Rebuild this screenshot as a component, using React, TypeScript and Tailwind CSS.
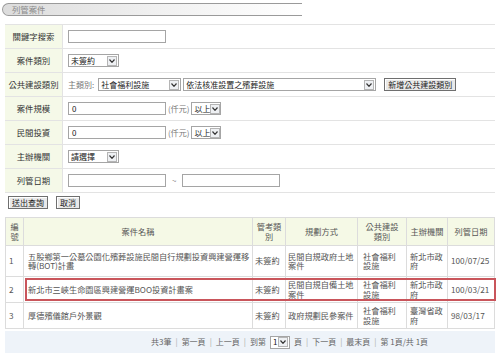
import React from 'react';

const font = { fontFamily: '"Noto Sans CJK TC", "Noto Sans", sans-serif' };

function Select({ w, label }: { w: number; label: string }) {
  return (
    <div
      className="flex h-[13px] items-center overflow-hidden whitespace-nowrap border border-[#a5a5a5] bg-white text-[8px] leading-none text-[#222]"
      style={{ width: w }}
    >
      <span className="flex-1 pl-[2px]">{label}</span>
      <span className="mr-[1px] flex h-[10px] w-[10px] shrink-0 items-center justify-center border border-[#b5b5b5] bg-[#eef0f3]">
        <svg width="6" height="4" viewBox="0 0 6 4">
          <path d="M0.5 0.5 L3 3.3 L5.5 0.5" fill="none" stroke="#333" strokeWidth="1.2" />
        </svg>
      </span>
    </div>
  );
}

function Input({ w, value = '' }: { w: number; value?: string }) {
  return (
    <div
      className="flex h-[13px] items-center border border-[#a5a5a5] bg-white pl-[3px] text-[8px] leading-none text-[#222]"
      style={{ width: w }}
    >
      {value}
    </div>
  );
}

function Btn({ children }: { children: React.ReactNode }) {
  return (
    <div className="flex h-[13px] items-center border border-[#6f6f6f] bg-[#e9e9e9] px-[3px] text-[8px] leading-none text-[#222] shadow-[inset_1px_1px_0_#fff]">
      {children}
    </div>
  );
}

function FormRow({ label, children }: { label: string; children: React.ReactNode }) {
  return (
    <div className="flex h-[24px] border-b border-[#e3e3e3]">
      <div className="flex w-[58px] items-center justify-center border-r border-[#e3e3e3] bg-[#f5f9e8] text-[8.4px] text-[#333]">
        {label}
      </div>
      <div className="flex flex-1 items-center gap-[2px] pl-[5px] text-[8px] text-[#555]">{children}</div>
    </div>
  );
}

const rows = [
  {
    no: '1',
    name: '五股鄉第一公墓公園化殯葬設施民間自行規劃投資興建營運移轉(BOT)計畫',
    type: '未簽約',
    plan: '民間自規政府土地案件',
    cat: '社會福利設施',
    org: '新北市政府',
    date: '100/07/25',
    h: 'h-[31px]',
    hl: false,
  },
  {
    no: '2',
    name: '新北市三峽生命園區興建營運BOO投資計畫案',
    type: '未簽約',
    plan: '民間自規自備土地案件',
    cat: '社會福利設施',
    org: '新北市政府',
    date: '100/03/21',
    h: 'h-[26px]',
    hl: true,
  },
  {
    no: '3',
    name: '厚德殯儀館戶外景觀',
    type: '未簽約',
    plan: '政府規劃民參案件',
    cat: '社會福利設施',
    org: '臺灣省政府',
    date: '98/03/17',
    h: 'h-[25px]',
    hl: false,
  },
];

const cols = ['w-[18px]', 'w-[229px]', 'w-[33px]', 'w-[72px]', 'w-[49px]', 'w-[41px]', 'flex-1'];
const headPad = ['px-[3px]', 'px-[3px]', 'px-[3px]', 'px-[3px]', 'px-[5px]', 'px-[3px]', 'px-[3px]'];

function App() {
  return (
    <div className="h-[353px] w-[500px] overflow-hidden bg-white" style={font}>
      {/* title */}
      <div className="px-[2px] pt-[3px]">
        <div className="flex h-[13px] w-[300px] items-center rounded-l-full border-y border-l border-[#9a9a9a] bg-gradient-to-r from-[#dcdcdc] via-[#f0f0f0] to-white pl-[9px] text-[8.4px] text-[#8a8a8a]">
          列管案件
        </div>
      </div>

      {/* search form */}
      <div className="mx-[5px] mt-[8px] border-t border-[#e3e3e3]">
        <FormRow label="關鍵字搜索">
          <Input w={98} />
        </FormRow>
        <FormRow label="案件類別">
          <Select w={51} label="未簽約" />
        </FormRow>
        <FormRow label="公共建設類別">
          <span className="mr-[2px] text-[#777]">主類別:</span>
          <Select w={83} label="社會福利設施" />
          <Select w={193} label="依法核准設置之殯葬設施" />
          <div className="ml-[6px]">
            <Btn>新增公共建設類別</Btn>
          </div>
        </FormRow>
        <FormRow label="案件規模">
          <Input w={98} value="0" />
          <span className="text-[#777]">(仟元)</span>
          <Select w={30} label="以上" />
        </FormRow>
        <FormRow label="民間投資">
          <Input w={98} value="0" />
          <span className="text-[#777]">(仟元)</span>
          <Select w={30} label="以上" />
        </FormRow>
        <FormRow label="主辦機關">
          <Select w={51} label="請選擇" />
        </FormRow>
        <FormRow label="列管日期">
          <Input w={98} />
          <span className="mx-[4px] text-[#888]">~</span>
          <Input w={98} />
        </FormRow>
      </div>

      {/* buttons */}
      <div className="flex gap-[8px] pl-[8px] pt-[3px]">
        <Btn>送出查詢</Btn>
        <Btn>取消</Btn>
      </div>

      {/* result table */}
      <div className="mx-[5px] mt-[8px] border border-[#dcdcdc] text-[8.2px] leading-[9.5px] text-[#555]">
        <div className="flex h-[28px] border-b border-[#dcdcdc] bg-[#f5f9e6] text-center">
          {['編號', '案件名稱', '管考類別', '規劃方式', '公共建設類別', '主辦機關', '列管日期'].map((h, i) => (
            <div
              key={h}
              className={`${cols[i]} ${headPad[i]} flex shrink-0 items-center justify-center border-r border-[#dcdcdc] last:border-r-0`}
            >
              {h}
            </div>
          ))}
        </div>
        {rows.map((r) => (
          <div key={r.no} className={`relative flex ${r.h} border-b border-[#dcdcdc] last:border-b-0`}>
            <div className={`${cols[0]} flex shrink-0 items-center border-r border-[#dcdcdc] pl-[3px]`}>{r.no}</div>
            <div className={`${cols[1]} flex shrink-0 items-center border-r border-[#dcdcdc] pl-[4px]`}>{r.name}</div>
            <div className={`${cols[2]} flex shrink-0 items-center border-r border-[#dcdcdc] px-[2px]`}>{r.type}</div>
            <div className={`${cols[3]} flex shrink-0 items-center border-r border-[#dcdcdc] px-[2px]`}>{r.plan}</div>
            <div className={`${cols[4]} flex shrink-0 items-center border-r border-[#dcdcdc] px-[5px]`}>{r.cat}</div>
            <div className={`${cols[5]} flex shrink-0 items-center border-r border-[#dcdcdc] px-[3px]`}>{r.org}</div>
            <div className={`${cols[6]} flex items-center whitespace-nowrap pl-[3px]`}>{r.date}</div>
            {r.hl && (
              <div className="pointer-events-none absolute inset-y-[1px] left-[19px] right-[-2px] border-2 border-[#c9555b]" />
            )}
          </div>
        ))}
      </div>

      {/* pagination */}
      <div className="mx-[5px] mt-[2px] flex h-[22px] items-center gap-[4px] bg-[#eef3f9] pl-[146px] text-[8px] text-[#666]">
        <span>共3筆</span>
        <span className="text-[#aaa]">|</span>
        <span>第一頁</span>
        <span className="text-[#aaa]">|</span>
        <span>上一頁</span>
        <span className="text-[#aaa]">|</span>
        <span>到第</span>
        <Select w={20} label="1" />
        <span>頁</span>
        <span className="text-[#aaa]">|</span>
        <span>下一頁</span>
        <span className="text-[#aaa]">|</span>
        <span>最末頁</span>
        <span className="text-[#aaa]">|</span>
        <span>第 1頁/共 1頁</span>
      </div>
    </div>
  );
}

export default App;
